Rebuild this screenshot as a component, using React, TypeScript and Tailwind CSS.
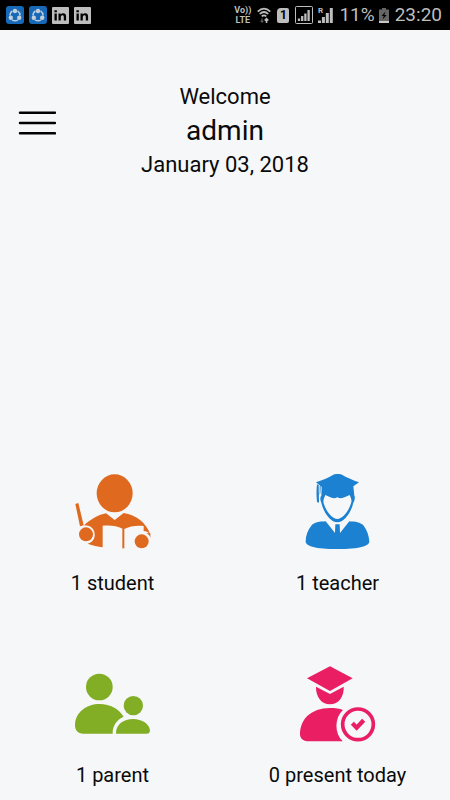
import type { ReactNode } from 'react';

interface Stat {
  id: string;
  label: string;
  icon: ReactNode;
}

function StudentIcon() {
  return (
    <svg viewBox="29 26 228 228" className="h-19 w-19" fill="#df691e" aria-hidden="true">
      <ellipse cx="148" cy="84" rx="54" ry="57" />
      <path d="M30 116 L39 113 L55 180 L44 183 Z" />
      <circle cx="62" cy="207" r="21" />
      <path d="M56 180 C76 162 100 148 122 144 L148 164 L175 143 C212 149 243 172 255 208 C248 199 242 197 235 197 L235 182 C214 180 194 182 175 192 C155 181 135 179 112 181 L112 246 C97 244 82 240 67 235 C82 231 89 220 88 206 C87 190 75 180 56 180 Z" />
      <rect x="171" y="190" width="6" height="59" />
      <circle cx="229" cy="228" r="25" fill="#f5f7f9" />
      <circle cx="229" cy="228" r="21" />
      <path d="M243 203 C250 207 254 212 255 218 L255 204 Z" />
    </svg>
  );
}

function TeacherIcon() {
  return (
    <svg viewBox="15 26 228 228" className="h-19 w-19" fill="#1c81d0" aria-hidden="true">
      <path d="M63 51 C84 44 102 36 115 28 C122 25 134 25 141 28 C156 37 174 44 192 51 L175 63 L178 91 C181 95 179 106 175 112 C169 140 148 171 127 171 C106 171 85 140 79 112 C75 105 75 95 79 91 L80 65 Z" />
      <path d="M91 89 C104 94 113 103 127 96 C141 103 151 94 164 89 C169 100 171 106 168 114 C161 137 143 161 127 161 C111 161 93 137 86 114 C84 106 86 100 91 89 Z" fill="#f5f7f9" />
      <path d="M66 57 L71 59 L72 112 L66 110 C64 92 64 74 66 57 Z" />
      <path d="M74 62 L77 63 L76 83 L74 90 Z" />
      <path d="M92 168 C72 169 58 171 50 180 C38 194 32 211 32 229 C33 242 61 251 127 251 C193 251 222 242 223 229 C222 211 216 194 205 180 C196 171 181 169 163 168 L135 203 L134 177 L121 177 L120 203 Z" />
    </svg>
  );
}

function ParentIcon() {
  return (
    <svg viewBox="30 17 228 228" className="h-19 w-19" fill="#82ae25" aria-hidden="true">
      <circle cx="103" cy="80" r="40" />
      <path d="M55 220 C38 219 30 210 30 194 C31 155 65 131 104 131 C136 131 162 146 176 169 C155 178 142 197 143 220 Z" />
      <circle cx="205" cy="136" r="29" />
      <path d="M153 220 C152 192 176 176 204 176 C232 176 253 191 255 210 C255 217 252 220 245 220 Z" />
    </svg>
  );
}

function PresentIcon() {
  return (
    <svg viewBox="30 17 228 228" className="h-19 w-19" fill="#e91e63" aria-hidden="true">
      <path d="M120 18 L188 54 L120 92 L51 54 Z" />
      <path d="M78 79 L120 101 L161 79 C163 108 146 132 120 132 C94 132 77 108 78 79 Z" />
      <path d="M52 243 C38 241 30 233 30 222 C31 176 62 144 120 143 C136 143 149 145 159 149 C133 172 133 219 158 243 Z" />
      <circle cx="204" cy="192" r="46" fill="none" stroke="#e91e63" strokeWidth="11" />
      <path d="M187 189 L200 202 L221 180" fill="none" stroke="#e91e63" strokeWidth="13" />
    </svg>
  );
}

function ShareItIcon() {
  return (
    <svg viewBox="0 0 18 18" className="h-[18px] w-[18px]" fill="none" aria-hidden="true">
      <rect width="18" height="18" rx="3" fill="#1769b8" />
      <path d="M4 9.500 A5.500 5.500 0 0 1 6.500 4.800 M11.500 4.800 A5.500 5.500 0 0 1 14 9.500 M12 13.800 A5.500 5.500 0 0 1 6 13.800" stroke="#b9cbdc" strokeWidth="1.500" />
      <circle cx="9" cy="5" r="2.200" fill="#c4cfda" />
      <circle cx="4.800" cy="11.800" r="2.200" fill="#c4cfda" />
      <circle cx="13.200" cy="11.800" r="2.200" fill="#c4cfda" />
    </svg>
  );
}

function LinkedInIcon() {
  return (
    <svg viewBox="0 0 17 17" className="h-[17px] w-[17px]" aria-hidden="true">
      <rect width="17" height="17" rx="1" fill="#bebebe" />
      <path d="M2.500 6.500h2.300v7H2.500z M2.400 3.200h2.500v2H2.400z M6.500 6.500h2.200v1c.6-.8 1.400-1.200 2.500-1.200 2 0 2.900 1.200 2.900 3.300v3.900h-2.300v-3.600c0-1-.4-1.700-1.300-1.700-1.100 0-1.700.8-1.700 1.900v3.400H6.500z" fill="#000" />
    </svg>
  );
}

function WifiIcon() {
  return (
    <svg viewBox="0 0 14 17" className="h-[17px] w-[14px]" fill="none" stroke="#bebebe" aria-hidden="true">
      <path d="M0.700 4.600 Q7 -1.200 13.300 4.600 M2.700 7 Q7 3 11.300 7 M4.700 9.300 Q7 7.300 9.300 9.300" strokeWidth="1.700" />
      <path d="M5 11.500 V15 M3.500 13.800 L5 15.300 L6.500 13.800" stroke="#777" />
      <path d="M9.500 16 V12 M7.700 13.500 L9.500 11.700 L11.300 13.500" strokeWidth="1.600" />
    </svg>
  );
}

function SignalIcon() {
  return (
    <svg viewBox="0 0 18 18" className="h-[18px] w-[18px]" fill="none" stroke="#bebebe" aria-hidden="true">
      <rect x="0.500" y="0.500" width="17" height="17" rx="1" />
      <path d="M4 15V12.500 M7.200 15V10 M10.400 15V7.500 M13.600 15V4" strokeWidth="2.300" />
    </svg>
  );
}

function RoamingIcon() {
  return (
    <svg viewBox="0 0 15 18" className="h-[18px] w-[15px]" aria-hidden="true">
      <text x="0" y="7" fontSize="8" className="font-[Roboto,sans-serif] font-bold" fill="#bebebe">R</text>
      <path d="M1.500 17V14.500 M5.400 17V11 M9.300 17V7 M13.300 17V2" stroke="#bebebe" strokeWidth="3" />
    </svg>
  );
}

function BatteryIcon() {
  return (
    <svg viewBox="0 0 10 15" className="h-[15px] w-[10px]" aria-hidden="true">
      <path d="M3 0h4v1.500h3V15H0V1.500h3z" fill="#666" />
      <path d="M0 13h10v2H0z" fill="#c8c8c8" />
      <path d="M6.500 3.500L2.500 8h2.300L3.500 11.500 7.700 7H5.300z" fill="#000" />
    </svg>
  );
}

const stats: Stat[] = [
  { id: 'students', label: '1 student', icon: <StudentIcon /> },
  { id: 'teachers', label: '1 teacher', icon: <TeacherIcon /> },
  { id: 'parents', label: '1 parent', icon: <ParentIcon /> },
  { id: 'present', label: '0 present today', icon: <PresentIcon /> },
];

export default function App() {
  return (
    <div className="flex min-h-screen flex-col bg-[#f5f7f9] font-[Roboto,sans-serif] text-[#0a0a0a]">
      {/* Status bar */}
      <div className="flex h-[30px] items-center justify-between bg-black pr-2 pl-1.5 text-[#bebebe]">
        <div className="flex items-center gap-[5px]">
          <ShareItIcon />
          <ShareItIcon />
          <LinkedInIcon />
          <LinkedInIcon />
        </div>
        <div className="flex items-center">
          <div className="mr-1.5 text-center text-[9px] leading-[10px] font-bold">
            <p>Vo))</p>
            <p>LTE</p>
          </div>
          <WifiIcon />
          <span className="mr-1.5 ml-1.5 flex h-[15px] w-3 items-center justify-center rounded-xs rounded-tl-sm bg-[#bebebe] text-[12px] font-bold text-black">
            1
          </span>
          <SignalIcon />
          <span className="ml-[5px]">
            <RoamingIcon />
          </span>
          <span className="mr-1 ml-1.5 text-[19px]">11%</span>
          <BatteryIcon />
          <span className="ml-1.5 text-[19px]">23:20</span>
        </div>
      </div>

      <header className="grid grid-cols-[1fr_auto_1fr] items-start pt-[50px]">
        <button type="button" aria-label="Open menu" className="mt-[31px] ml-[18px] w-[38px]">
          <svg viewBox="0 0 38 24" className="h-6 w-[38px]" stroke="#000" strokeWidth="2.500" strokeLinecap="round" aria-hidden="true">
            <path d="M2 1.700H37 M2 12H37 M2 22.300H37" />
          </svg>
        </button>
        <div className="text-center text-[22px] leading-[34px]">
          <p>Welcome</p>
          <h1 className="text-[28px] leading-[34px]">admin</h1>
          <p>January 03, 2018</p>
        </div>
      </header>

      <main className="mt-auto grid grid-cols-2 gap-y-[69px] pb-[11px]">
        {stats.map((stat) => (
          <section key={stat.id} className="flex flex-col items-center gap-[19px]">
            {stat.icon}
            <p className="text-[20px] leading-7">{stat.label}</p>
          </section>
        ))}
      </main>
    </div>
  );
}
